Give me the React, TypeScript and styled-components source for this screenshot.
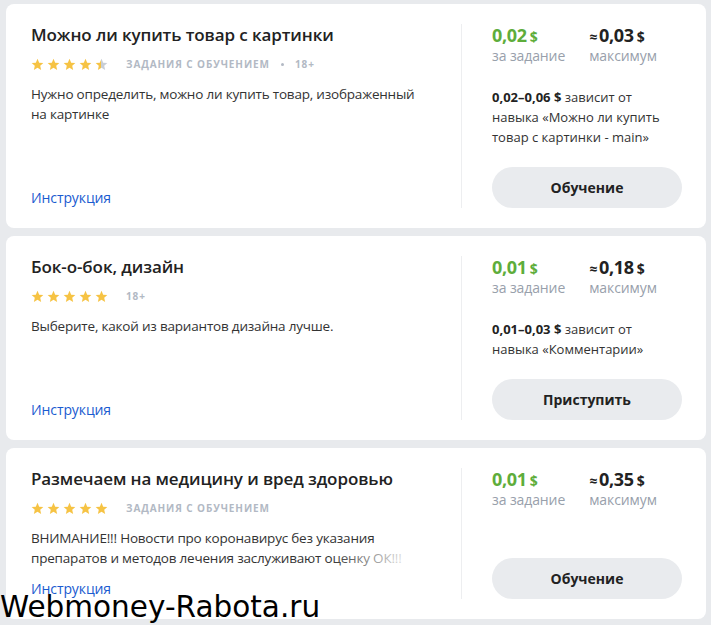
import styled, { createGlobalStyle } from "styled-components";

const GlobalStyle = createGlobalStyle`
  html, body {
    margin: 0;
    padding: 0;
    background: #e8eaed;
  }
  body {
    font-family: "Open Sans", "Noto Sans", sans-serif;
    color: #222;
    -webkit-font-smoothing: antialiased;
  }
`;

type Task = {
  id: number;
  title: string;
  rating: number;
  training: boolean;
  adult: boolean;
  description: string;
  clamp?: boolean;
  price: string;
  max: string;
  range?: string;
  skill?: string;
  action: string;
};

const tasks: Task[] = [
  {
    id: 1,
    title: "Можно ли купить товар с картинки",
    rating: 4.5,
    training: true,
    adult: true,
    description: "Нужно определить, можно ли купить товар, изображенный на картинке",
    price: "0,02",
    max: "0,03",
    range: "0,02–0,06 $",
    skill: "Можно ли купить товар с картинки - main",
    action: "Обучение",
  },
  {
    id: 2,
    title: "Бок-о-бок, дизайн",
    rating: 5,
    training: false,
    adult: true,
    description: "Выберите, какой из вариантов дизайна лучше.",
    price: "0,01",
    max: "0,18",
    range: "0,01–0,03 $",
    skill: "Комментарии",
    action: "Приступить",
  },
  {
    id: 3,
    title: "Размечаем на медицину и вред здоровью",
    rating: 5,
    training: true,
    adult: false,
    description:
      "ВНИМАНИЕ!!! Новости про коронавирус без указания препаратов и методов лечения заслуживают оценку ОК!!!",
    clamp: true,
    price: "0,01",
    max: "0,35",
    action: "Обучение",
  },
];

const Page = styled.main`
  display: flex;
  flex-direction: column;
  gap: 8px;
  padding: 4px 5px 6px 6px;
`;

const Card = styled.section`
  display: flex;
  background: #fff;
  border-radius: 8px;
  padding: 20px 24px 20px 25px;
`;

const MainCol = styled.div`
  flex: 1;
  display: flex;
  flex-direction: column;
  padding-right: 30px;
  min-width: 0;
`;

const Title = styled.h2`
  margin: 0;
  font-size: 17px;
  line-height: 22px;
  font-weight: 600;
  color: #222;
  letter-spacing: -0.1px;
`;

const Meta = styled.div`
  display: flex;
  align-items: center;
  height: 16px;
  margin-top: 10px;
`;

const Stars = styled.div`
  display: flex;
  gap: 3px;
  margin-right: 18px;
`;

const Tag = styled.span`
  font-size: 10px;
  font-weight: 700;
  letter-spacing: 0.9px;
  text-transform: uppercase;
  color: #b2b9c4;
`;

const Dot = styled.span`
  width: 3px;
  height: 3px;
  border-radius: 50%;
  background: #b2b9c4;
  margin: 0 11px;
`;

const Description = styled.p<{ $clamp?: boolean }>`
  position: relative;
  margin: 12px 0 0;
  font-size: 13.5px;
  line-height: 20px;
  letter-spacing: -0.2px;
  color: #333;
  ${(p) =>
    p.$clamp &&
    `
    max-height: 40px;
    overflow: hidden;
    &::after {
      content: "";
      position: absolute;
      right: 0;
      bottom: 0;
      width: 100px;
      height: 20px;
      background: linear-gradient(to right, rgba(255,255,255,0), #fff 85%);
    }
  `}
`;

const Link = styled.a`
  margin-top: auto;
  padding-top: 11px;
  font-size: 14px;
  line-height: 20px;
  letter-spacing: -0.1px;
  color: #1a5bd0;
  text-decoration: none;
  cursor: pointer;
`;

const SideCol = styled.aside`
  width: 190px;
  flex-shrink: 0;
  display: flex;
  flex-direction: column;
  padding-left: 30px;
  border-left: 1px solid #edeef0;
`;

const Prices = styled.div`
  display: flex;
  gap: 24px;
`;

const PriceBox = styled.div`
  display: flex;
  flex-direction: column;
`;

const Amount = styled.div<{ $accent?: boolean }>`
  font-size: 18px;
  line-height: 22px;
  height: 22px;
  font-weight: 700;
  color: ${(p) => (p.$accent ? "#5ead3b" : "#222")};
  letter-spacing: -0.3px;
  white-space: nowrap;
`;

const Currency = styled.span`
  font-size: 14px;
  line-height: 1;
  margin-left: 3px;
`;

const Approx = styled.span`
  font-size: 14px;
  line-height: 1;
  margin-right: 2px;
`;

const Caption = styled.div`
  font-size: 14px;
  line-height: 20px;
  letter-spacing: -0.1px;
  color: #98a0ab;
`;

const Skill = styled.p`
  margin: 21px 0 0;
  font-size: 13px;
  line-height: 20px;
  color: #333;

  b {
    font-weight: 700;
    color: #222;
  }
`;

const ActionButton = styled.button<{ $afterSkill?: boolean }>`
  margin-top: ${(p) => (p.$afterSkill ? "20px" : "auto")};
  height: 41px;
  width: 100%;
  border: none;
  border-radius: 21px;
  background: #e9ebee;
  font-family: inherit;
  font-size: 14px;
  font-weight: 700;
  color: #222;
  cursor: pointer;
`;

const Watermark = styled.div`
  position: absolute;
  left: 0;
  top: 590px;
  font-family: "DejaVu Sans", sans-serif;
  font-size: 29.5px;
  line-height: 34px;
  color: #000;
`;

const StarIcon = ({ fill }: { fill: number }) => {
  const gid = `star-${Math.round(fill * 100)}`;
  return (
    <svg width="13" height="13" viewBox="0 0 24 24">
      <defs>
        <linearGradient id={gid} x1="0" x2="1" y1="0" y2="0">
          <stop offset={fill} stopColor="#f6c344" />
          <stop offset={fill} stopColor="#c8ced6" />
        </linearGradient>
      </defs>
      <path
        d="M12 1.5l3.1 7.1 7.7.7-5.8 5.1 1.7 7.6L12 18.1 5.3 22l1.7-7.6L1.2 9.3l7.7-.7z"
        fill={`url(#${gid})`}
      />
    </svg>
  );
};

const Rating = ({ value }: { value: number }) => (
  <Stars>
    {[0, 1, 2, 3, 4].map((i) => (
      <StarIcon key={i} fill={Math.max(0, Math.min(1, value - i))} />
    ))}
  </Stars>
);

export default function App() {
  return (
    <>
      <GlobalStyle />
      <Page>
        {tasks.map((task) => (
          <Card key={task.id}>
            <MainCol>
              <Title>{task.title}</Title>
              <Meta>
                <Rating value={task.rating} />
                {task.training && <Tag>Задания с обучением</Tag>}
                {task.training && task.adult && <Dot />}
                {task.adult && <Tag>18+</Tag>}
              </Meta>
              <Description $clamp={task.clamp}>{task.description}</Description>
              <Link>Инструкция</Link>
            </MainCol>
            <SideCol>
              <Prices>
                <PriceBox>
                  <Amount $accent>
                    {task.price}
                    <Currency>$</Currency>
                  </Amount>
                  <Caption>за задание</Caption>
                </PriceBox>
                <PriceBox>
                  <Amount>
                    <Approx>≈</Approx>
                    {task.max}
                    <Currency>$</Currency>
                  </Amount>
                  <Caption>максимум</Caption>
                </PriceBox>
              </Prices>
              {task.skill && (
                <Skill>
                  <b>{task.range}</b> зависит от навыка «{task.skill}»
                </Skill>
              )}
              <ActionButton $afterSkill={!!task.skill}>{task.action}</ActionButton>
            </SideCol>
          </Card>
        ))}
      </Page>
      <Watermark>Webmoney-Rabota.ru</Watermark>
    </>
  );
}
